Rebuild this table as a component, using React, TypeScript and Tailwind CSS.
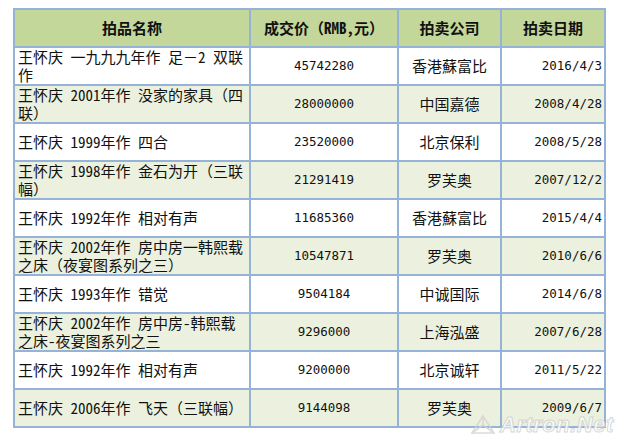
import React from "react";

type Row = {
  name: string[];
  price: string;
  house: string;
  date: string;
};

const rows: Row[] = [
  { name: ["王怀庆 一九九九年作 足－2 双联", "作"], price: "45742280", house: "香港蘇富比", date: "2016/4/3" },
  { name: ["王怀庆 2001年作 没家的家具（四", "联）"], price: "28000000", house: "中国嘉德", date: "2008/4/28" },
  { name: ["王怀庆 1999年作 四合"], price: "23520000", house: "北京保利", date: "2008/5/28" },
  { name: ["王怀庆 1998年作 金石为开（三联", "幅）"], price: "21291419", house: "罗芙奥", date: "2007/12/2" },
  { name: ["王怀庆 1992年作 相对有声"], price: "11685360", house: "香港蘇富比", date: "2015/4/4" },
  { name: ["王怀庆 2002年作 房中房一韩熙载", "之床（夜宴图系列之三）"], price: "10547871", house: "罗芙奥", date: "2010/6/6" },
  { name: ["王怀庆 1993年作 错觉"], price: "9504184", house: "中诚国际", date: "2014/6/8" },
  { name: ["王怀庆 2002年作 房中房-韩熙载", "之床-夜宴图系列之三"], price: "9296000", house: "上海泓盛", date: "2007/6/28" },
  { name: ["王怀庆 1992年作 相对有声"], price: "9200000", house: "北京诚轩", date: "2011/5/22" },
  { name: ["王怀庆 2006年作 飞天（三联幅）"], price: "9144098", house: "罗芙奥", date: "2009/6/7" },
];

const font = "[font-family:'Noto_Sans_Mono_CJK_SC','Noto_Sans_CJK_SC',sans-serif]";
const mono = "font-['DejaVu_Sans_Mono',monospace] text-[12.5px]";

function ArtronMark() {
  return (
    <div className="pointer-events-none absolute left-[470px] top-[414px] flex items-center gap-1 opacity-80">
      <svg width="26" height="22" viewBox="0 0 26 22" fill="none" stroke="#d4d4d4" strokeWidth="1.6">
        <path d="M2 19 L13 2 L24 19 Z" />
        <path d="M2 19 L13 11 L24 19" />
        <path d="M13 2 L13 11" />
      </svg>
      <span className="font-['Liberation_Sans',sans-serif] text-[22px] font-bold italic leading-none tracking-[0.5px] text-white [-webkit-text-stroke:1px_#cfcfcf]">
        Artron.Net
      </span>
    </div>
  );
}

export default function App() {
  return (
    <div className={`relative h-[446px] w-[622px] bg-white text-[15px] text-[#111] ${font}`}>
      <div className="pl-[13px] pt-[8px]">
        <table className="w-[591px] table-fixed border-collapse border-2 border-[#95b3d7]">
          <colgroup>
            <col className="w-[236px]" />
            <col className="w-[148px]" />
            <col className="w-[103px]" />
            <col className="w-[104px]" />
          </colgroup>
          <thead>
            <tr className="h-[38px] bg-[#c4d79b]">
              <th className="border-2 border-[#95b3d7] text-center font-bold">拍品名称</th>
              <th className="border-2 border-[#95b3d7] text-center font-bold">成交价（RMB,元）</th>
              <th className="border-2 border-[#95b3d7] text-center font-bold">拍卖公司</th>
              <th className="border-2 border-[#95b3d7] text-center font-bold">拍卖日期</th>
            </tr>
          </thead>
          <tbody>
            {rows.map((r, i) => (
              <tr key={i} className={`h-[38px] ${i % 2 === 1 ? "bg-[#ebf1de]" : "bg-white"}`}>
                <td className="border-2 border-[#95b3d7] px-[3px] align-middle leading-[18px]">
                  {r.name.map((line, j) => (
                    <div key={j} className="whitespace-pre">
                      {line}
                    </div>
                  ))}
                </td>
                <td className={`border-2 border-[#95b3d7] text-center align-middle ${mono}`}>{r.price}</td>
                <td className="border-2 border-[#95b3d7] text-center align-middle">{r.house}</td>
                <td className={`border-2 border-[#95b3d7] pr-[2px] text-right align-middle ${mono}`}>{r.date}</td>
              </tr>
            ))}
          </tbody>
        </table>
      </div>
      <ArtronMark />
    </div>
  );
}
